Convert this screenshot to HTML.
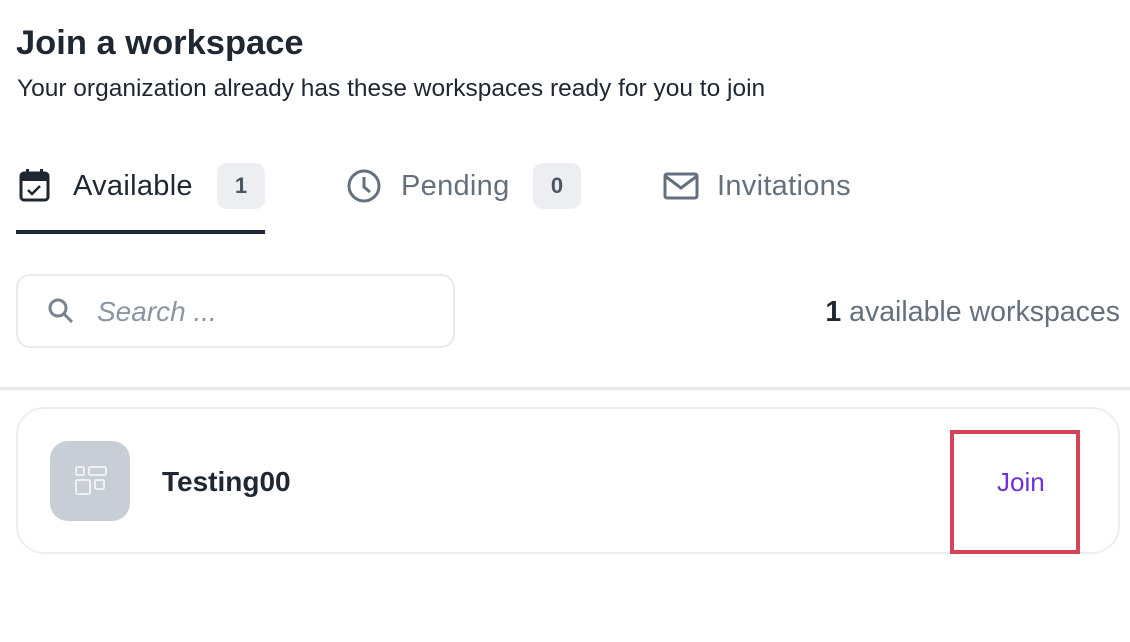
<!DOCTYPE html>
<html><head><meta charset="utf-8"><style>
*{margin:0;padding:0;box-sizing:border-box}
body{width:1130px;height:642px;background:#fff;font-family:"Liberation Sans",sans-serif;color:#1f2937;position:relative;overflow:hidden}
.a{position:absolute}
h1{position:absolute;left:16px;top:24px;font-size:34.5px;font-weight:bold;color:#1f2733}
.sub{left:17px;top:75px;font-size:24.5px;color:#1f2733}
.tab{font-size:29px;top:170px;letter-spacing:0.3px}
.badge{background:#eceef1;border-radius:10px;width:48px;height:46px;font-size:22px;font-weight:bold;text-align:center;line-height:46px;top:163px;color:#4b5563}
</style></head><body>
<h1>Join a workspace</h1>
<div class="a sub">Your organization already has these workspaces ready for you to join</div>

<svg class="a" style="left:18px;top:168px" width="34" height="36" viewBox="0 0 34 36"><rect x="3" y="5" width="27" height="27" rx="3" fill="none" stroke="#1f2733" stroke-width="3"/><rect x="3" y="5" width="27" height="8" fill="#1f2733"/><rect x="8" y="1" width="3" height="6" fill="#1f2733"/><rect x="22" y="1" width="3" height="6" fill="#1f2733"/><path d="M10 22l4 4 8-8" fill="none" stroke="#1f2733" stroke-width="2.5"/></svg>
<div class="a tab" style="left:73px;color:#1f2733">Available</div>
<div class="a badge" style="left:217px">1</div>
<div class="a" style="left:16px;top:230px;width:249px;height:4px;background:#1f2733"></div>

<svg class="a" style="left:346px;top:168px" width="36" height="36" viewBox="0 0 36 36"><circle cx="18" cy="18" r="15" fill="none" stroke="#64707d" stroke-width="3"/><path d="M18 9v10l6 5" fill="none" stroke="#64707d" stroke-width="3"/></svg>
<div class="a tab" style="left:401px;color:#64707d">Pending</div>
<div class="a badge" style="left:533px">0</div>

<svg class="a" style="left:663px;top:172px" width="36" height="28" viewBox="0 0 36 28"><rect x="2" y="2" width="32" height="24" rx="2" fill="none" stroke="#64707d" stroke-width="3"/><path d="M2 4l16 12 16-12" fill="none" stroke="#64707d" stroke-width="3"/></svg>
<div class="a tab" style="left:717px;color:#64707d">Invitations</div>

<div class="a" style="left:16px;top:274px;width:439px;height:74px;border:2px solid #e8eaed;border-radius:14px"></div>
<svg class="a" style="left:47px;top:297px" width="28" height="28" viewBox="0 0 28 28"><circle cx="11" cy="11" r="8" fill="none" stroke="#78838e" stroke-width="3"/><path d="M17 17l8 8" stroke="#78838e" stroke-width="3"/></svg>
<div class="a" style="left:97px;top:296px;font-size:28px;font-style:italic;color:#8a96a3">Search ...</div>
<div class="a" style="right:10px;top:296px;font-size:28.5px;color:#64707d"><b style="color:#1f2733">1</b> available workspaces</div>

<div class="a" style="left:0;top:387px;width:1130px;height:3px;background:#e8eaed"></div>

<div class="a" style="left:16px;top:407px;width:1104px;height:147px;border:2px solid #eceef0;border-radius:28px"></div>
<div class="a" style="left:50px;top:441px;width:80px;height:80px;background:#c8ced6;border-radius:18px"></div>
<svg class="a" style="left:74px;top:465px" width="34" height="32" viewBox="0 0 34 32"><g fill="none" stroke="#eef0f3" stroke-width="2"><rect x="2" y="2" width="8" height="8" rx="1.5"/><rect x="15" y="2" width="17" height="8" rx="1.5"/><rect x="2" y="15" width="14" height="14" rx="1.5"/><rect x="21" y="15" width="9" height="9" rx="1.5"/></g></svg>
<div class="a" style="left:162px;top:466px;font-size:28px;font-weight:bold;color:#1f2733">Testing00</div>

<div class="a" style="left:950px;top:430px;width:130px;height:124px;border:4px solid #d6425a"></div>
<div class="a" style="left:997px;top:467px;font-size:26px;color:#6d2fe0">Join</div>
</body></html>
